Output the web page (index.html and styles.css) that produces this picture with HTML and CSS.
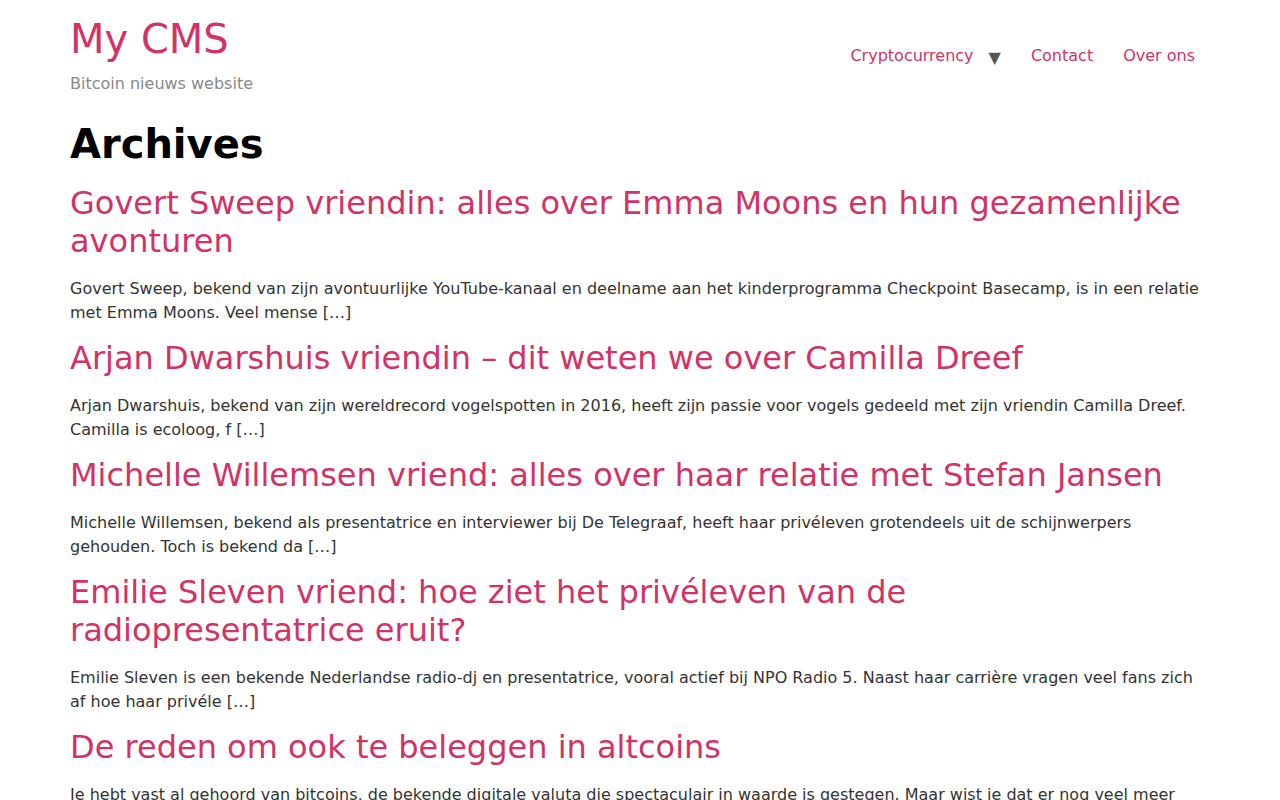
FILE: index.html
```html
<!DOCTYPE html>
<html lang="nl">
<head>
    <meta charset="utf-8"/>
    <meta content="width=device-width, initial-scale=1" name="viewport"/>
    <title>Archives - My CMS</title>
    <link rel="stylesheet" href="styles.css">
</head>
<body>
    <div class="container">
        <header class="site-header">
            <div class="branding">
                <a href="#" class="site-title">My CMS</a>
                <p class="site-tagline">Bitcoin nieuws website</p>
            </div>
            <nav class="main-nav">
                <div class="nav-item has-sub">
                    <a href="#">Cryptocurrency</a>
                    <span class="sub-arrow">&#9660;</span>
                </div>
                <div class="nav-item">
                    <a href="#">Contact</a>
                </div>
                <div class="nav-item">
                    <a href="#">Over ons</a>
                </div>
            </nav>
        </header>

        <main>
            <h1 class="page-title">Archives</h1>

            <article class="post">
                <h2><a href="#">Govert Sweep vriendin: alles over Emma Moons en hun gezamenlijke avonturen</a></h2>
                <p>Govert Sweep, bekend van zijn avontuurlijke YouTube-kanaal en deelname aan het kinderprogramma Checkpoint Basecamp, is in een relatie met Emma Moons. Veel mense [&hellip;]</p>
            </article>

            <article class="post">
                <h2><a href="#">Arjan Dwarshuis vriendin &ndash; dit weten we over Camilla Dreef</a></h2>
                <p>Arjan Dwarshuis, bekend van zijn wereldrecord vogelspotten in 2016, heeft zijn passie voor vogels gedeeld met zijn vriendin Camilla Dreef. Camilla is ecoloog, f [&hellip;]</p>
            </article>

            <article class="post">
                <h2><a href="#">Michelle Willemsen vriend: alles over haar relatie met Stefan Jansen</a></h2>
                <p>Michelle Willemsen, bekend als presentatrice en interviewer bij De Telegraaf, heeft haar privéleven grotendeels uit de schijnwerpers gehouden. Toch is bekend da [&hellip;]</p>
            </article>

            <article class="post">
                <h2><a href="#">Emilie Sleven vriend: hoe ziet het privéleven van de radiopresentatrice eruit?</a></h2>
                <p>Emilie Sleven is een bekende Nederlandse radio-dj en presentatrice, vooral actief bij NPO Radio 5. Naast haar carrière vragen veel fans zich af hoe haar privéle [&hellip;]</p>
            </article>

            <article class="post">
                <h2><a href="#">De reden om ook te beleggen in altcoins</a></h2>
                <p>Je hebt vast al gehoord van bitcoins, de bekende digitale valuta die spectaculair in waarde is gestegen. Maar wist je dat er nog veel meer cryptocurrencies zijn? [&hellip;]</p>
            </article>
        </main>
    </div>
</body>
</html>
```

FILE: styles.css
```css
* {
    box-sizing: border-box;
}
body, html {
    margin: 0;
    padding: 0;
    font-family: "DejaVu Sans", "Liberation Sans", sans-serif;
    color: #333;
    background: #fff;
}
a {
    color: #d13366;
    text-decoration: none;
}
.container {
    width: 1140px;
    margin: 0 auto;
}
.site-header {
    display: flex;
    justify-content: space-between;
    align-items: center;
    padding-top: 15px;
}
.site-title {
    display: block;
    font-size: 40px;
    line-height: 48px;
}
.site-tagline {
    margin: 9px 0 0;
    font-size: 16px;
    line-height: 24px;
    color: #888;
}
.main-nav {
    display: flex;
    align-items: center;
    margin-top: 1px;
}
.nav-item {
    display: flex;
    align-items: center;
}
.nav-item a {
    padding: 0 15px;
    font-size: 16px;
    line-height: 24px;
}
.sub-arrow {
    color: #555;
    font-size: 16px;
    margin: 2px 15px 0 0;
}
main {
    padding-top: 24px;
}
.page-title {
    margin: 0 0 16px;
    font-size: 40px;
    line-height: 48px;
    font-weight: bold;
    color: #000;
}
.post h2 {
    margin: 0 0 17px;
    font-size: 32px;
    line-height: 38px;
    font-weight: normal;
}
.post p {
    margin: 0 0 14px;
    font-size: 16px;
    line-height: 24px;
}
```
